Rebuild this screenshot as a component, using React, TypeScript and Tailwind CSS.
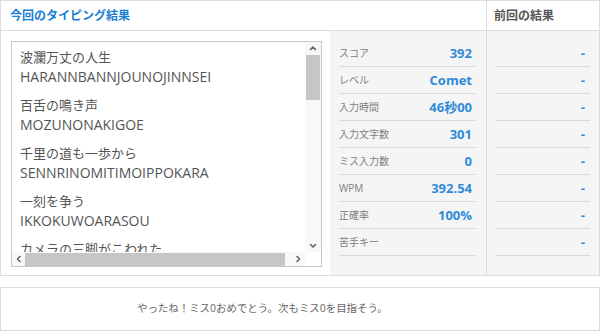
import React from "react";

const entries: [string, string][] = [
  ["波瀾万丈の人生", "HARANNBANNJOUNOJINNSEI"],
  ["百舌の鳴き声", "MOZUNONAKIGOE"],
  ["千里の道も一歩から", "SENNRINOMITIMOIPPOKARA"],
  ["一刻を争う", "IKKOKUWOARASOU"],
  ["カメラの三脚がこわれた", "KAMERANOSANNKYAKUGAKOWARETA"],
];

const stats: [string, string][] = [
  ["スコア", "392"],
  ["レベル", "Comet"],
  ["入力時間", "46秒00"],
  ["入力文字数", "301"],
  ["ミス入力数", "0"],
  ["WPM", "392.54"],
  ["正確率", "100%"],
  ["苦手キー", ""],
];

const font = { fontFamily: '"Open Sans","Noto Sans CJK JP",sans-serif' };

function Chevron({ dir }: { dir: "up" | "down" | "left" | "right" }) {
  const paths: Record<string, string> = {
    up: "M1.5 5.5 L4 3 L6.5 5.5",
    down: "M1.5 2.5 L4 5 L6.5 2.5",
    left: "M5 1.5 L2.5 4 L5 6.5",
    right: "M3 1.5 L5.5 4 L3 6.5",
  };
  return (
    <svg width="8" height="8" viewBox="0 0 8 8">
      <path d={paths[dir]} fill="none" stroke="#606060" strokeWidth="1.6" strokeLinecap="round" strokeLinejoin="round" />
    </svg>
  );
}

export default function App() {
  return (
    <div className="w-[600px] h-[331px] bg-white overflow-hidden" style={font}>
      <div className="w-[600px] h-[276px] border border-[#dcdcdc] flex flex-col">
        <div className="h-[30px] flex border-b border-[#dcdcdc]">
          <div className="w-[485px] pl-[9px] flex items-center text-[12px] font-bold text-[#1b7fd4] leading-none">
            今回のタイピング結果
          </div>
          <div className="flex-1 border-l border-[#dcdcdc] pl-[7px] flex items-center text-[12px] font-bold text-[#555] leading-none">
            前回の結果
          </div>
        </div>
        <div className="flex h-[244px]">
          <div className="w-[329px] bg-white pl-[10px] pt-[10px]">
            <div className="relative w-[311px] h-[226px] border border-[#c8c8c8] overflow-hidden bg-white">
              <div className="pl-[8px] pt-[5px] text-[13px] text-[#555] leading-[20px] whitespace-nowrap">
                {entries.map(([jp, ro]) => (
                  <div key={ro} className="mb-[8px]">
                    <div>{jp}</div>
                    <div className="text-[14px]">{ro}</div>
                  </div>
                ))}
              </div>
              <div className="absolute right-0 top-0 bottom-[14px] w-[16px] bg-[#f8f8f8]">
                <div className="absolute top-[2px] left-0 right-0 flex justify-center">
                  <Chevron dir="up" />
                </div>
                <div className="absolute top-[13px] left-[1px] right-[1px] h-[45px] bg-[#c6c6c6]" />
                <div className="absolute bottom-[2px] left-0 right-0 flex justify-center">
                  <Chevron dir="down" />
                </div>
              </div>
              <div className="absolute left-0 bottom-0 right-[16px] h-[14px] bg-[#f8f8f8]">
                <div className="absolute left-[3px] top-0 bottom-0 flex items-center">
                  <Chevron dir="left" />
                </div>
                <div className="absolute left-[13px] top-[1px] bottom-0 w-[260px] bg-[#c6c6c6]" />
                <div className="absolute right-[3px] top-0 bottom-0 flex items-center">
                  <Chevron dir="right" />
                </div>
              </div>
              <div className="absolute right-0 bottom-0 w-[16px] h-[14px] bg-white" />
            </div>
          </div>
          <div className="w-[156px] bg-[#f5f5f5] pt-[9px] pl-[9px] pr-[10px]">
            {stats.map(([label, value]) => (
              <div key={label} className="h-[27px] flex items-center justify-between border-b border-[#dadada] pr-[4px]">
                <span className="text-[10px] text-[#808080] leading-none">{label}</span>
                <span className="text-[13px] font-bold text-[#2f8bd8] leading-none">{value}</span>
              </div>
            ))}
          </div>
          <div className="flex-1 border-l border-[#dcdcdc] bg-[#f5f5f5] pt-[9px] pl-[8px] pr-[9px]">
            {stats.map(([label]) => (
              <div key={label} className="h-[27px] flex items-center justify-end border-b border-[#dadada] pr-[5px]">
                <span className="text-[13px] font-bold text-[#2f8bd8] leading-none">-</span>
              </div>
            ))}
          </div>
        </div>
      </div>
      <div className="mt-[11px] w-[600px] h-[44px] border border-[#dcdcdc] flex items-center pl-[136px] text-[10.45px] text-[#666]">
        やったね！ミス0おめでとう。次もミス0を目指そう。
      </div>
    </div>
  );
}
